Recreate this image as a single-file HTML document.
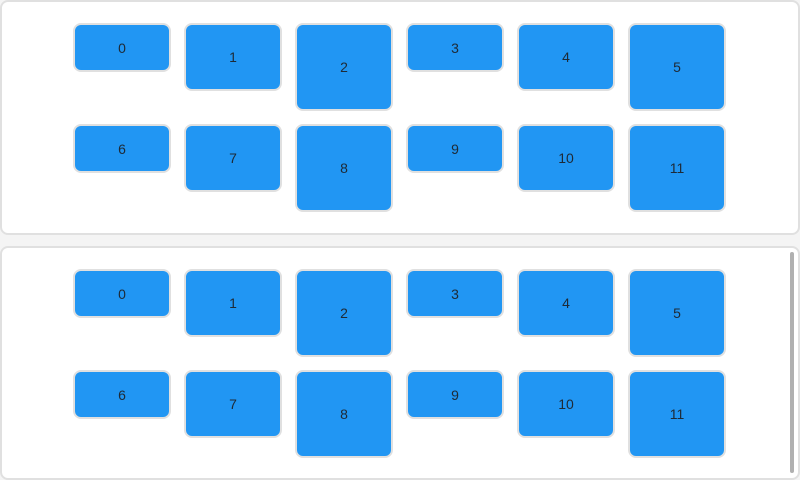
<!DOCTYPE html><html><head><style>
body{margin:0;width:800px;height:480px;background:#f4f4f4;position:relative;overflow:hidden;font-family:"Liberation Sans",sans-serif}
.p{position:absolute;left:0;width:796px;background:#fff;border:2px solid #e0e0e0;border-radius:8px}
.b{position:absolute;width:94px;background:#2196f3;border:2px solid #e0e0e0;border-radius:8px;display:flex;align-items:center;justify-content:center;font-size:14px;color:#1e2a36}
</style></head><body>
<div class="p" style="top:0;height:231px"></div>
<div class="p" style="top:246px;height:230px"></div>
<div style="position:absolute;left:790px;top:252px;width:4px;height:221px;background:#b0b0b0;border-radius:2px"></div>
<div id="c"></div>
<script>
var xs=[73,184,295,406,517,628],hs=[45,64,84],h='';
[[23,124],[269,370]].forEach(function(r){for(var i=0;i<12;i++){var y=r[Math.floor(i/6)],x=xs[i%6];h+='<div class="b" style="left:'+x+'px;top:'+y+'px;height:'+hs[i%3]+'px">'+i+'</div>';}});
document.getElementById('c').innerHTML=h;
</script>
</body></html>
